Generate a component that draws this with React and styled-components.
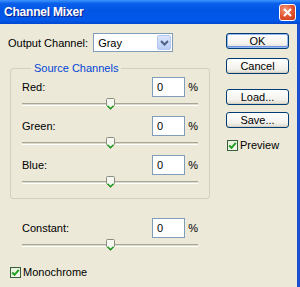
import styled, { createGlobalStyle } from "styled-components";

const GlobalStyle = createGlobalStyle`
  html, body {
    margin: 0;
    padding: 0;
    background: #ECE9D8;
  }
  body {
    font-family: "Liberation Sans", Arial, sans-serif;
    font-size: 11px;
    color: #000;
  }
`;

const canais = ["Red", "Green", "Blue"];

const Thumb = () => (
  <svg width="9" height="12" viewBox="0 0 9 12">
    <path d="M1.5 0.5 H7.5 Q8.5 0.5 8.5 1.5 V7.5 L4.5 11.5 L0.5 7.5 V1.5 Q0.5 0.5 1.5 0.5 Z" fill="#F7F7F2" stroke="#8A8C80" />
    <path d="M1.5 7.8 L4.5 10.6 L7.5 7.8" fill="none" stroke="#21A121" strokeWidth="1.4" />
  </svg>
);

const Check = () => (
  <svg width="9" height="9" viewBox="0 0 9 9">
    <path d="M1.2 4.5 L3.5 6.8 L7.8 1.8" fill="none" stroke="#21A121" strokeWidth="2" />
  </svg>
);

const Slider = () => (
  <SliderArea>
    <Track />
    <ThumbSpot>
      <Thumb />
    </ThumbSpot>
  </SliderArea>
);

const Channel = ({ nome }) => (
  <>
    <ValueRow>
      <Label>{nome}:</Label>
      <NumberBox>0</NumberBox>
      <Percent>%</Percent>
    </ValueRow>
    <Slider />
  </>
);

const App = () => {
  return (
    <>
      <GlobalStyle />
      <Janela>
        <TitleBar>
          <Title>Channel Mixer</Title>
          <CloseButton>
            <svg width="9" height="9" viewBox="0 0 9 9">
              <path d="M1 1 L8 8 M8 1 L1 8" stroke="#fff" strokeWidth="2" />
            </svg>
          </CloseButton>
        </TitleBar>
        <Corpo>
          <Principal>
            <OutputRow>
              <OutputLabel>Output Channel:</OutputLabel>
              <Select>
                <SelectText>Gray</SelectText>
                <SelectArrow>
                  <svg width="9" height="6" viewBox="0 0 9 6">
                    <path d="M1 1 L4.5 4.5 L8 1" fill="none" stroke="#4D6185" strokeWidth="2" />
                  </svg>
                </SelectArrow>
              </Select>
            </OutputRow>
            <Grupo>
              <Legenda>Source Channels</Legenda>
              {canais.map((c) => (
                <Channel key={c} nome={c} />
              ))}
            </Grupo>
            <Constante>
              <Channel nome="Constant" />
            </Constante>
            <CheckRow $left={10} $top={9}>
              <CheckBox>
                <Check />
              </CheckBox>
              Monochrome
            </CheckRow>
          </Principal>
          <Lateral>
            <Botao $default $top={9}>OK</Botao>
            <Botao $top={9}>Cancel</Botao>
            <Botao $top={15}>Load...</Botao>
            <Botao $top={7}>Save...</Botao>
            <CheckRow $left={1} $top={11}>
              <CheckBox>
                <Check />
              </CheckBox>
              Preview
            </CheckRow>
          </Lateral>
        </Corpo>
      </Janela>
    </>
  );
};

const Janela = styled.div`
  width: 300px;
  height: 287px;
  display: flex;
  flex-direction: column;
  overflow: hidden;
`;

const TitleBar = styled.div`
  height: 24px;
  flex: none;
  display: flex;
  align-items: center;
  justify-content: space-between;
  padding: 0 4px 0 4px;
  background: linear-gradient(
    to bottom,
    #3D95FF 0%,
    #0A5FEA 15%,
    #0055E5 45%,
    #0158EA 85%,
    #0047D0 100%
  );
`;

const Title = styled.span`
  color: #fff;
  font-weight: bold;
  font-size: 12px;
  letter-spacing: -0.2px;
  text-shadow: 1px 1px 0 #0F1E8C;
`;

const CloseButton = styled.div`
  width: 17px;
  height: 17px;
  box-sizing: border-box;
  border: 1px solid #fff;
  border-radius: 3px;
  background: radial-gradient(circle at 35% 30%, #F29A7E, #E0512E 55%, #C23A1A);
  display: flex;
  align-items: center;
  justify-content: center;
`;

const Corpo = styled.div`
  flex: 1;
  display: flex;
  border-right: 3px solid #1A4FD0;
`;

const Principal = styled.div`
  width: 212px;
  padding-top: 9px;
  display: flex;
  flex-direction: column;
`;

const OutputRow = styled.div`
  display: flex;
  align-items: center;
  gap: 5px;
  padding-left: 8px;
`;

const Label = styled.span`
  flex: 1;
  white-space: nowrap;
`;

const OutputLabel = styled.span`
  white-space: nowrap;
`;

const Select = styled.div`
  width: 80px;
  height: 19px;
  box-sizing: border-box;
  border: 1px solid #7F9DB9;
  background: #fff;
  display: flex;
  align-items: center;
`;

const SelectText = styled.span`
  flex: 1;
  padding-left: 4px;
`;

const SelectArrow = styled.div`
  width: 14px;
  height: 15px;
  margin-right: 1px;
  border-radius: 2px;
  background: linear-gradient(to bottom, #DCE6FB, #B8CCF6);
  border: 1px solid #B5C8F2;
  box-sizing: border-box;
  display: flex;
  align-items: center;
  justify-content: center;
`;

const Grupo = styled.fieldset`
  margin: 10px 0 0 10px;
  width: 200px;
  box-sizing: border-box;
  padding: 2px 11px 4px 11px;
  border: 1px solid #D0D0BF;
  border-radius: 3px;
`;

const Legenda = styled.legend`
  color: #0046D5;
  padding: 0 3px;
  margin-left: 9px;
  line-height: 13px;
`;

const ValueRow = styled.div`
  display: flex;
  align-items: center;
  height: 20px;
`;

const NumberBox = styled.div`
  width: 33px;
  height: 20px;
  box-sizing: border-box;
  border: 1px solid #7F9DB9;
  background: #fff;
  padding-left: 4px;
  display: flex;
  align-items: center;
`;

const Percent = styled.span`
  width: 13px;
  text-align: right;
`;

const SliderArea = styled.div`
  height: 19px;
  box-sizing: border-box;
  padding-top: 6px;
  position: relative;
`;

const Track = styled.div`
  height: 1px;
  border-top: 1px solid #A7A698;
  border-bottom: 1px solid #fff;
  background: #DCDACB;
`;

const ThumbSpot = styled.div`
  position: absolute;
  left: 84px;
  top: 1px;
  line-height: 0;
`;

const Constante = styled.div`
  margin: 19px 0 0 22px;
  width: 176px;
`;

const CheckRow = styled.div`
  display: flex;
  align-items: center;
  gap: 2px;
  margin-left: ${(p) => p.$left}px;
  margin-top: ${(p) => p.$top}px;
`;

const CheckBox = styled.div`
  width: 11px;
  height: 11px;
  box-sizing: border-box;
  border: 1px solid #35603A;
  background: linear-gradient(135deg, #E8EEDB, #F8FAF2);
  display: flex;
  align-items: center;
  justify-content: center;
`;

const Lateral = styled.div`
  width: 63px;
  padding-left: 14px;
  display: flex;
  flex-direction: column;
`;

const Botao = styled.div`
  height: 16px;
  margin-top: ${(p) => p.$top}px;
  box-sizing: border-box;
  border: 1px solid #003C74;
  border-radius: 3px;
  background: linear-gradient(to bottom, #FFFFFF, #F3F2EC 70%, #DCDAD0);
  box-shadow: ${(p) => (p.$default ? "inset 0 0 0 1px #98B8F0, inset 0 -1px 0 1px #6A93E2" : "inset 0 -1px 0 #D6D0C0")};
  display: flex;
  align-items: center;
  justify-content: center;
`;

export default App;
